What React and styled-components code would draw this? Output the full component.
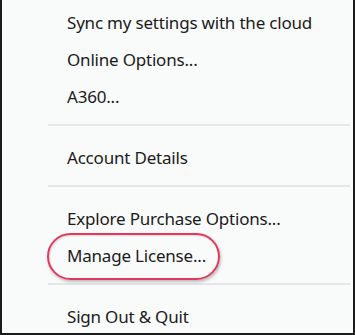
import React from 'react';
import styled, { createGlobalStyle } from 'styled-components';

const GlobalStyle = createGlobalStyle`
  html, body {
    margin: 0;
    padding: 0;
    background: #ffffff;
  }
`;

const Menu = styled.div`
  width: 355px;
  height: 335px;
  box-sizing: border-box;
  background: #f9fafa;
  border-left: 2px solid #1c1c1c;
  border-right: 2px solid #1c1c1c;
  border-bottom: 2px solid #1c1c1c;
  padding-top: 4px;
  font-family: "Noto Sans", "Open Sans", sans-serif;
  color: #1b1b1b;
  overflow: hidden;
`;

const Item = styled.div`
  position: relative;
  height: 37px;
  line-height: 37px;
  padding-left: 65px;
  font-size: 17px;
  letter-spacing: -0.2px;
  white-space: nowrap;
`;

const Divider = styled.div`
  height: 2px;
  background: #e4e7e7;
  margin: 9px 3px 13px 46px;
`;

const Highlight = styled.span`
  position: absolute;
  left: 45px;
  top: -4px;
  width: 173px;
  height: 47px;
  box-sizing: border-box;
  border: 2.5px solid #e2385e;
  border-radius: 24px;
  box-shadow: 1px 2px 3px rgba(0, 0, 0, 0.25), inset 1px 1px 2px rgba(0, 0, 0, 0.12);
  pointer-events: none;
`;

const groups = [
  ['Sync my settings with the cloud', 'Online Options...', 'A360...'],
  ['Account Details'],
  ['Explore Purchase Options...', 'Manage License...'],
  ['Sign Out & Quit'],
];

const App = () => {
  return (
    <>
      <GlobalStyle />
      <Menu>
        {groups.map((group, gi) => (
          <React.Fragment key={gi}>
            {gi > 0 && <Divider />}
            {group.map((label) => (
              <Item key={label}>
                {label}
                {label === 'Manage License...' && <Highlight />}
              </Item>
            ))}
          </React.Fragment>
        ))}
      </Menu>
    </>
  );
};

export default App;
